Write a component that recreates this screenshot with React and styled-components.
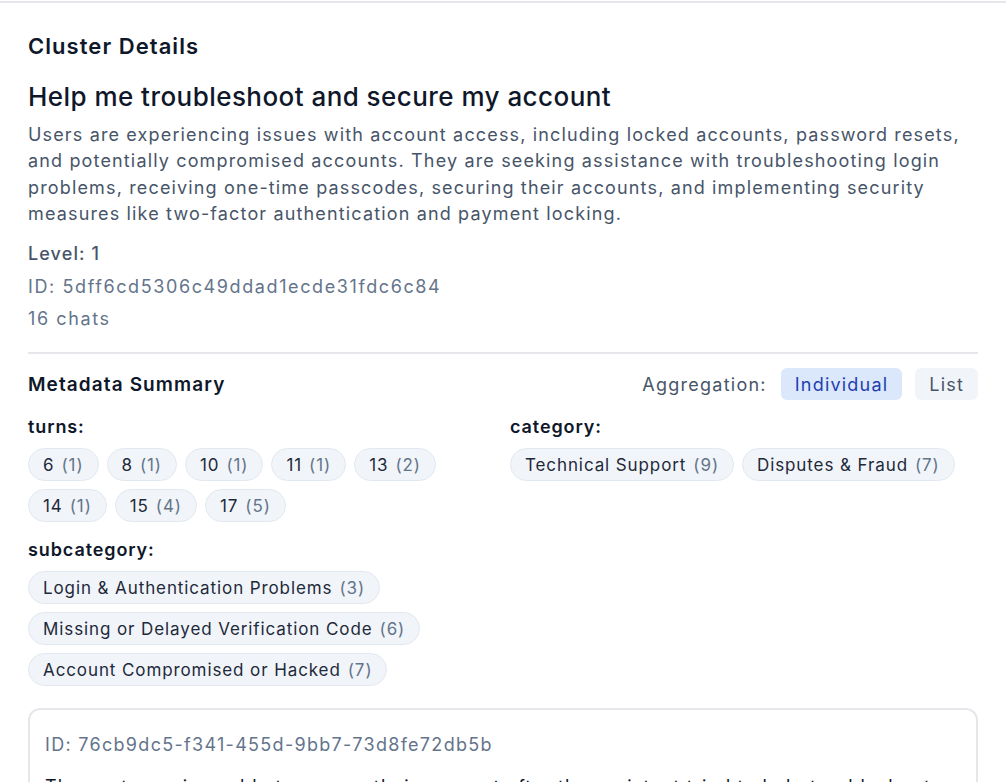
import React from 'react';
import styled, { createGlobalStyle } from 'styled-components';

const GlobalStyle = createGlobalStyle`
  html, body {
    margin: 0;
    padding: 0;
    background: #ffffff;
    font-family: Inter, "Noto Sans", sans-serif;
    color: #0f172a;
  }
`;

const Panel = styled.div`
  margin-top: 1px;
  border-top: 2px solid #e5e7eb;
  padding: 28px 28px 0;
  overflow: hidden;
  height: 781px;
  box-sizing: border-box;
`;

const PanelTitle = styled.h2`
  margin: 0;
  font-size: 22px;
  line-height: 30px;
  font-weight: 600;
  letter-spacing: 1.05px;
  color: #0f172a;
`;

const ClusterName = styled.h3`
  margin: 20px 0 0;
  font-size: 26px;
  line-height: 32px;
  font-weight: 500;
  letter-spacing: 0.45px;
  color: #0f172a;
`;

const Description = styled.p`
  margin: 9px 0 0;
  font-size: 18px;
  line-height: 26.3px;
  letter-spacing: 1.15px;
  color: #475569;
`;

const Meta = styled.div`
  margin-top: 14px;
  display: flex;
  flex-direction: column;
  gap: 6.5px;
`;

const MetaLine = styled.div`
  font-size: 18px;
  line-height: 26px;
  letter-spacing: ${(p) => (p.$strong ? '1.1px' : '1.6px')};
  color: ${(p) => (p.$strong ? '#475569' : '#64748b')};
  font-weight: ${(p) => (p.$strong ? 500 : 400)};
`;

const Divider = styled.hr`
  margin: 20px 0 0;
  border: none;
  border-top: 2px solid #e5e7eb;
`;

const SummaryHeader = styled.div`
  margin-top: 14px;
  display: flex;
  align-items: center;
  justify-content: space-between;
`;

const SectionTitle = styled.h4`
  margin: 0;
  font-size: 19px;
  font-weight: 600;
  letter-spacing: 1.1px;
  color: #0f172a;
`;

const Toggle = styled.div`
  display: flex;
  align-items: center;
  gap: 13px;
`;

const ToggleLabel = styled.span`
  font-size: 18px;
  letter-spacing: 1.25px;
  color: #475569;
  margin-right: 1px;
`;

const ToggleButton = styled.button`
  font-family: inherit;
  font-size: 18px;
  letter-spacing: 1.2px;
  height: 32px;
  padding: 0 14px;
  border: none;
  border-radius: 6px;
  background: ${(p) => (p.$active ? '#dbe7fb' : '#f1f5f9')};
  color: ${(p) => (p.$active ? '#1e40af' : '#475569')};
  cursor: pointer;
`;

const FieldGrid = styled.div`
  margin-top: 16px;
  display: grid;
  grid-template-columns: 1fr 1fr;
  column-gap: 14px;
  row-gap: 17px;
`;

const Field = styled.div`
  display: flex;
  flex-direction: column;
  gap: 10px;
`;

const FieldLabel = styled.div`
  font-size: 18px;
  line-height: 22px;
  font-weight: 600;
  letter-spacing: 0.9px;
  color: #0f172a;
`;

const ChipList = styled.div`
  display: flex;
  flex-direction: ${(p) => (p.$stacked ? 'column' : 'row')};
  flex-wrap: wrap;
  gap: 8px;
  align-items: flex-start;
`;

const Chip = styled.span`
  display: inline-flex;
  align-items: center;
  gap: 7px;
  height: 33px;
  box-sizing: border-box;
  padding: 0 14px;
  border-radius: 999px;
  border: 1px solid #e2e8f0;
  background: #f1f5f9;
  font-size: 17px;
  letter-spacing: 0.9px;
  color: #1e293b;
  white-space: nowrap;
`;

const Count = styled.span`
  color: #64748b;
`;

const ChatCard = styled.div`
  margin-top: 22px;
  border: 2px solid #e5e7eb;
  border-radius: 12px;
  padding: 22px 15px;
`;

const ChatId = styled.div`
  font-size: 18px;
  line-height: 26px;
  letter-spacing: 1.3px;
  color: #64748b;
`;

const ChatText = styled.p`
  margin: 16px 0 0;
  font-size: 18px;
  line-height: 26px;
  letter-spacing: 1.15px;
  color: #0f172a;
`;

const fields = [
  {
    name: 'turns',
    values: [['6', 1], ['8', 1], ['10', 1], ['11', 1], ['13', 2], ['14', 1], ['15', 4], ['17', 5]],
  },
  {
    name: 'category',
    values: [['Technical Support', 9], ['Disputes & Fraud', 7]],
  },
  {
    name: 'subcategory',
    values: [
      ['Login & Authentication Problems', 3],
      ['Missing or Delayed Verification Code', 6],
      ['Account Compromised or Hacked', 7],
    ],
    stacked: true,
  },
];

export default function App() {
  return (
    <>
      <GlobalStyle />
      <Panel>
        <PanelTitle>Cluster Details</PanelTitle>
        <ClusterName>Help me troubleshoot and secure my account</ClusterName>
        <Description>
          Users are experiencing issues with account access, including locked accounts, password resets,
          and potentially compromised accounts. They are seeking assistance with troubleshooting login
          problems, receiving one-time passcodes, securing their accounts, and implementing security
          measures like two-factor authentication and payment locking.
        </Description>
        <Meta>
          <MetaLine $strong>Level: 1</MetaLine>
          <MetaLine>ID: 5dff6cd5306c49ddad1ecde31fdc6c84</MetaLine>
          <MetaLine>16 chats</MetaLine>
        </Meta>
        <Divider />
        <SummaryHeader>
          <SectionTitle>Metadata Summary</SectionTitle>
          <Toggle>
            <ToggleLabel>Aggregation:</ToggleLabel>
            <ToggleButton $active>Individual</ToggleButton>
            <ToggleButton>List</ToggleButton>
          </Toggle>
        </SummaryHeader>
        <FieldGrid>
          {fields.map((f) => (
            <Field key={f.name}>
              <FieldLabel>{f.name}:</FieldLabel>
              <ChipList $stacked={f.stacked}>
                {f.values.map(([v, n]) => (
                  <Chip key={v}>
                    {v} <Count>({n})</Count>
                  </Chip>
                ))}
              </ChipList>
            </Field>
          ))}
        </FieldGrid>
        <ChatCard>
          <ChatId>ID: 76cb9dc5-f341-455d-9bb7-73d8fe72db5b</ChatId>
          <ChatText>
            The customer is unable to access their account after the assistant tried to help troubleshoot a
            locked login and a missing verification code.
          </ChatText>
        </ChatCard>
      </Panel>
    </>
  );
}
